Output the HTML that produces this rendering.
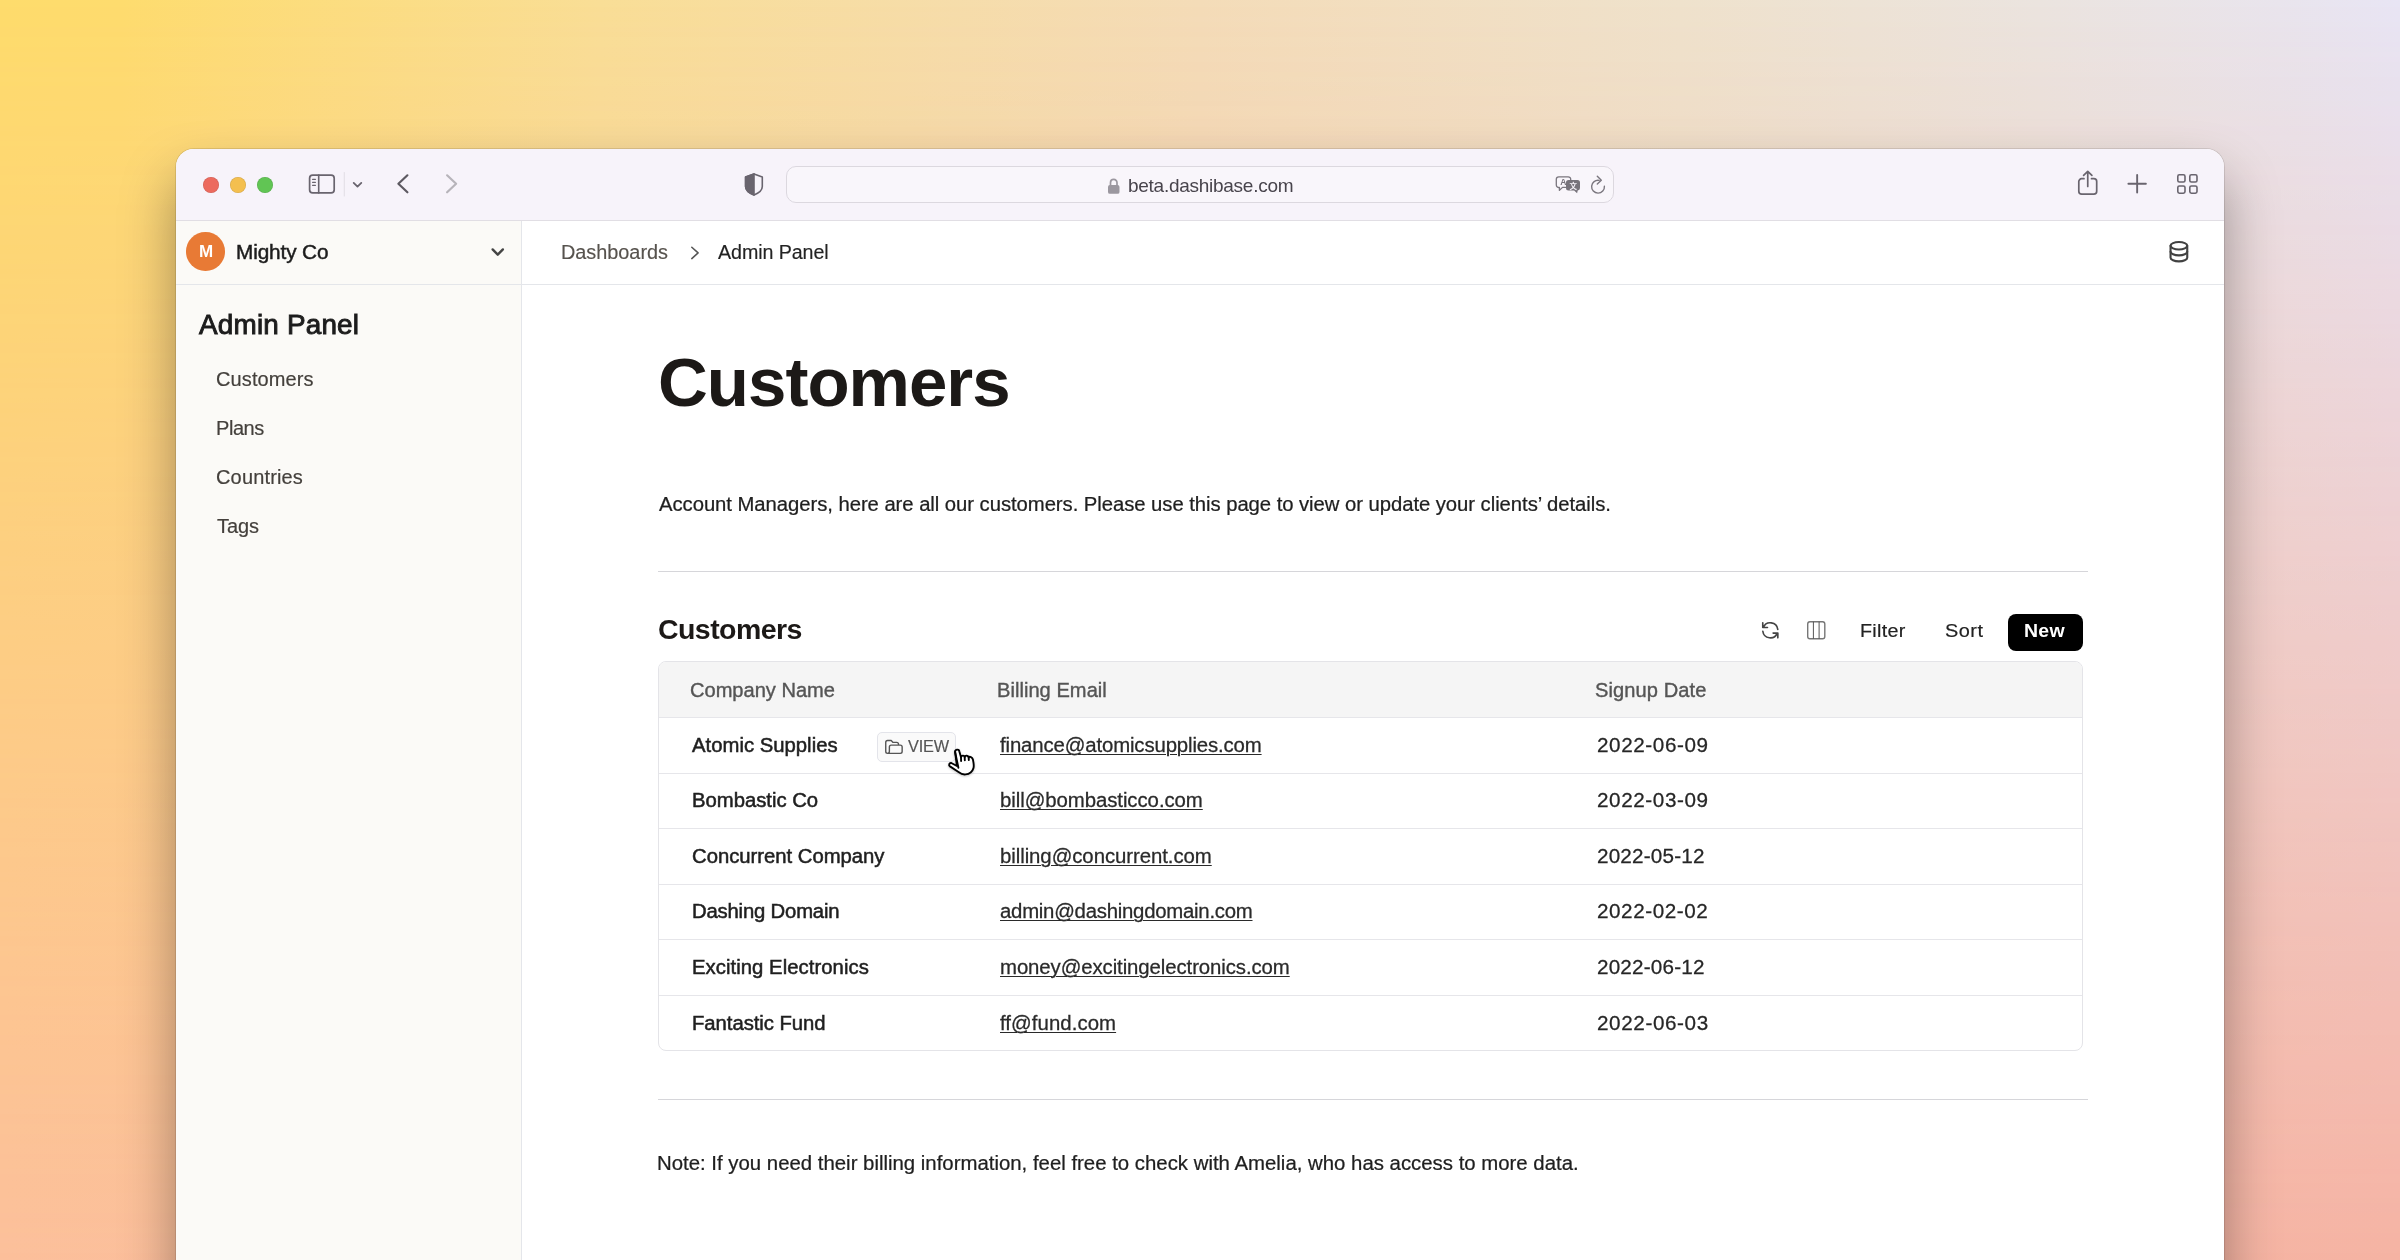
<!DOCTYPE html>
<html lang="en">
<head>
<meta charset="utf-8">
<title>Customers – Admin Panel</title>
<style>

*{box-sizing:border-box}
html,body{margin:0;padding:0}
body{width:2400px;height:1260px;overflow:hidden;position:relative;font-family:"Liberation Sans",sans-serif;background:#f6d9a8}
.bg,.bg2{position:absolute;left:0;top:0;width:2400px;height:1260px}
.bg{background:linear-gradient(90deg,#fedc6c 0%,#fedc6e 5%,#f9de96 25%,#f4dcb8 50%,#efe2cc 70%,#ebe4df 85%,#e8e5f4 100%)}
.bg2{background:linear-gradient(90deg,#fcbf9b 0%,#f8b9a0 50%,#f5b3a3 100%);-webkit-mask-image:linear-gradient(180deg,rgba(0,0,0,0) 0%,rgba(0,0,0,1) 100%);mask-image:linear-gradient(180deg,rgba(0,0,0,0) 0%,rgba(0,0,0,1) 100%)}
.win{position:absolute;left:176px;top:149px;width:2048px;height:1180px;border-radius:18px 18px 0 0;background:#fff;box-shadow:0 0 0 1px rgba(0,0,0,.10),0 30px 54px rgba(0,0,0,.36)}
.clip{position:absolute;left:0;top:0;width:100%;height:100%;border-radius:18px 18px 0 0;overflow:hidden}
.t{will-change:transform;position:absolute;line-height:1;white-space:nowrap;margin:0;padding:0;font-weight:400}
.abs{position:absolute}
svg{position:absolute;overflow:visible;will-change:transform}
a{color:inherit}

</style>
</head>
<body>
<div class="bg"></div><div class="bg2"></div>
<div class="win">

<div class="clip">
<header class="abs" style="left:0;top:0;width:2048px;height:72px;background:#f7f3fa;border-bottom:1px solid #e1dee4">
  <i class="abs" style="left:27.25px;top:27.5px;width:16px;height:16px;border-radius:50%;background:#ec6a5e;box-shadow:inset 0 0 0 .6px rgba(0,0,0,.12)"></i>
  <i class="abs" style="left:54.25px;top:27.5px;width:16px;height:16px;border-radius:50%;background:#f4bf4f;box-shadow:inset 0 0 0 .6px rgba(0,0,0,.12)"></i>
  <i class="abs" style="left:81.25px;top:27.5px;width:16px;height:16px;border-radius:50%;background:#61c554;box-shadow:inset 0 0 0 .6px rgba(0,0,0,.12)"></i>
  <div class="abs" style="left:610px;top:17px;width:828px;height:37px;border:1px solid #dcd8df;border-radius:10px;background:rgba(255,255,255,.28)"></div>
  <svg width="2048" height="71" viewBox="0 0 2048 71" style="left:0;top:0" fill="none" stroke="#69646e" stroke-linecap="round" stroke-linejoin="round">
    <!-- sidebar toggle -->
    <rect x="133.6" y="26.1" width="24.6" height="17.8" rx="3.1" stroke-width="1.7"/>
    <path d="M142.7 26.1V43.9" stroke-width="1.6"/>
    <path d="M136.600 30.300h2.800M136.600 33.300h2.800M136.600 36.300h2.800" stroke-width="1.350"/>
    <path d="M168.25 23.5V47" stroke="#e1dde4" stroke-width="1"/>
    <path d="M177.7 33.9l3.8 3.7 3.8-3.7" stroke-width="1.8"/>
    <!-- back / forward -->
    <path d="M231.400 26.300l-9 8.500 9 8.500" stroke="#5d5961" stroke-width="2.200"/>
    <path d="M271.100 26.300l9 8.500-9 8.500" stroke="#b7b4ba" stroke-width="2.200"/>
    <!-- shield -->
    <path d="M578 24.900l-8.400 3v9.600c0 4 3.400 6.500 8.400 8.500 5-2 8.300-4.500 8.300-8.500v-9.600z" stroke-width="1.600"/>
    <path d="M578 24.900l-8.400 3v9.600c0 4 3.400 6.500 8.400 8.500z" fill="#69646e" stroke-width="1.600"/>
    <!-- lock -->
    <rect x="932" y="36" width="11.500" height="8.800" rx="1.900" fill="#9b979f" stroke="none"/>
    <path d="M934.500 36.500v-2.800a3.250 3.250 0 0 1 6.500 0v2.800" stroke="#9b979f" stroke-width="1.7"/>
    <!-- translate -->
    <g stroke="#7a767e">
    <path d="M1382.800 27.800h9.400a2.500 2.500 0 0 1 2.500 2.500v.600M1389.500 38.400h-3l-3.100 3v-3a2.500 2.500 0 0 1-3.100-2.400v-5.700a2.500 2.500 0 0 1 2.500-2.500" stroke-width="1.300"/>
    <path d="M1392.500 31h9a2.500 2.500 0 0 1 2.500 2.500v5.600a2.500 2.500 0 0 1-2.300 2.500l-.600 2.700-3-2.700h-5.600a2.500 2.500 0 0 1-2.500-2.500v-5.600a2.500 2.500 0 0 1 2.500-2.500z" fill="#77737b" stroke="none"/>
    <!-- reload -->
    <path d="M1428.400 37.100a6.400 6.400 0 1 1-5.300-5.730" stroke-width="1.400"/>
    <path d="M1421.300 27.300l4 4-4 3.700" stroke-width="1.400"/>
    </g>
    <!-- share -->
    <path d="M1908 29.700h-2.300a2.900 2.900 0 0 0-2.900 2.900v9.700a2.900 2.900 0 0 0 2.900 2.900h12.100a2.900 2.900 0 0 0 2.900-2.900v-9.700a2.900 2.900 0 0 0-2.900-2.900h-2.300" stroke-width="1.700"/>
    <path d="M1911.750 37.500v-14.800M1907.600 26.400l4.150-4.100 4.150 4.100" stroke-width="1.700"/>
    <!-- plus -->
    <path d="M1952.400 34.750h17.500M1961.150 26v17.500" stroke-width="1.900"/>
    <!-- grid -->
    <rect x="2001.800" y="25.800" width="7.200" height="7.200" rx="1.600" stroke-width="1.600"/>
    <rect x="2013.800" y="25.800" width="7.200" height="7.200" rx="1.600" stroke-width="1.600"/>
    <rect x="2001.800" y="37" width="7.200" height="7.200" rx="1.600" stroke-width="1.600"/>
    <rect x="2013.800" y="37" width="7.200" height="7.200" rx="1.600" stroke-width="1.600"/>
    <text x="1384.200" y="36.100" font-family="Liberation Sans, sans-serif" font-size="8.500" font-weight="700" fill="#77737b" stroke="none">A</text>
    <text x="1393.600" y="40.200" font-family="Liberation Sans, Noto Sans CJK SC, sans-serif" font-size="7.500" font-weight="700" fill="#f7f3fa" stroke="none">文</text>
  </svg>
  <span class="t" style="left:952.00px;top:27.00px;font-size:19px;color:#48444c;letter-spacing:-0.266px;">beta.dashibase.com</span>
</header>


<aside class="abs" style="left:0;top:72px;width:346px;height:1108px;background:#fbfaf7;border-right:1px solid #e4e6ea"></aside>
<div class="abs" style="left:0;top:135px;width:2048px;height:1px;background:#e4e6ea"></div>
<div class="abs" style="left:10.4px;top:83.3px;width:38.5px;height:38.5px;border-radius:50%;background:#e87a35"></div>
<span class="t" style="left:22.55px;top:93.61px;font-size:17px;color:#fff;font-weight:700;">M</span>
<span class="t" style="left:60.00px;top:94.00px;font-size:19.4px;color:#1c1c1c;letter-spacing:-0.102px;-webkit-text-stroke:0.45px #1c1c1c;transform:scaleX(1.07);transform-origin:0 0;">Mighty Co</span>
<nav>
  <a class="t" style="left:385.00px;top:94.00px;font-size:19.5px;color:#57534e;letter-spacing:-0.033px;-webkit-text-stroke:0.15px #57534e;transform:scaleX(1.02);transform-origin:0 0;">Dashboards</a>
  <a class="t" style="left:542.00px;top:94.00px;font-size:19.5px;color:#232323;letter-spacing:-0.097px;-webkit-text-stroke:0.15px #232323;transform:scaleX(1.01);transform-origin:0 0;">Admin Panel</a>
</nav>
<svg width="2048" height="64" viewBox="0 72 2048 64" style="left:0;top:72px" fill="none" stroke-linecap="round" stroke-linejoin="round">
  <path d="M316.600 100.400l5.150 5.300 5.150-5.300" stroke="#444" stroke-width="2.400"/>
  <path d="M515.800 98.200l6.300 5.700-6.300 5.700" stroke="#555" stroke-width="1.550"/>
  <g stroke="#414141" stroke-width="2.100">
    <ellipse cx="2002.900" cy="96.750" rx="8.350" ry="3.700"/>
    <path d="M1994.550 96.750V108.650a8.350 3.700 0 0 0 16.700 0V96.750"/>
    <path d="M1994.550 102.700a8.350 3.700 0 0 0 16.700 0"/>
  </g>
</svg>
<h2 class="t" style="left:23.00px;top:163.00px;font-size:26.8px;color:#1c1c1c;letter-spacing:0.19px;-webkit-text-stroke:0.9px #1c1c1c;transform:scaleX(1.04);transform-origin:0 0;">Admin Panel</h2>
<ul style="list-style:none;margin:0;padding:0">
    <li><a class="t" style="left:40.00px;top:221.00px;font-size:19.5px;color:#44403c;letter-spacing:0.117px;-webkit-text-stroke:0.18px #44403c;transform:scaleX(1.025);transform-origin:0 0;">Customers</a></li>
    <li><a class="t" style="left:40.00px;top:270.00px;font-size:19.5px;color:#44403c;letter-spacing:-0.413px;-webkit-text-stroke:0.18px #44403c;transform:scaleX(1.025);transform-origin:0 0;">Plans</a></li>
    <li><a class="t" style="left:40.00px;top:319.00px;font-size:19.5px;color:#44403c;letter-spacing:0.16px;-webkit-text-stroke:0.18px #44403c;transform:scaleX(1.025);transform-origin:0 0;">Countries</a></li>
    <li><a class="t" style="left:41.00px;top:368.00px;font-size:19.5px;color:#44403c;letter-spacing:-0.091px;-webkit-text-stroke:0.18px #44403c;transform:scaleX(1.025);transform-origin:0 0;">Tags</a></li>
</ul>


<main>
<h1 class="t" style="left:482.00px;top:199.00px;font-size:69px;color:#1c1917;font-weight:700;letter-spacing:-0.986px;">Customers</h1>
<p class="t" style="left:483.00px;top:346.00px;font-size:19.5px;color:#1f1f1f;letter-spacing:-0.05px;-webkit-text-stroke:0.24px #1f1f1f;transform:scaleX(1.04);transform-origin:0 0;">Account Managers, here are all our customers. Please use this page to view or update your clients’ details.</p>
<div class="abs" style="left:482px;top:421.75px;width:1430px;height:1px;background:#d6d6da"></div>
<h2 class="t" style="left:482.00px;top:466.00px;font-size:28.5px;color:#1c1917;font-weight:700;letter-spacing:-0.564px;">Customers</h2>
<svg width="22.600" height="22.600" viewBox="0 0 24 24" style="left:1582.900px;top:470.200px" fill="none" stroke="#444" stroke-width="1.750" stroke-linecap="round" stroke-linejoin="round"><path d="M4 4v5h.582m15.356 2A8.001 8.001 0 004.582 9m0 0H9m11 11v-5h-.581m0 0a8.003 8.003 0 01-15.357-2m15.357 2H15"/></svg>
<svg width="22" height="22" viewBox="0 0 22 22" style="left:1629px;top:469.900px" fill="none"><rect x="2.700" y="2.700" width="17.100" height="17.100" rx="2.200" stroke="#777" stroke-width="1.400"/><path d="M8.400 2.700v17.100M14.100 2.700v17.100" stroke="#555" stroke-width="1"/></svg>
<span class="t" style="left:1684.00px;top:473.00px;font-size:18.3px;color:#222;letter-spacing:0.247px;-webkit-text-stroke:0.18px #222;transform:scaleX(1.08);transform-origin:0 0;">Filter</span>
<span class="t" style="left:1769.00px;top:473.00px;font-size:18.3px;color:#222;letter-spacing:0.445px;-webkit-text-stroke:0.18px #222;transform:scaleX(1.09);transform-origin:0 0;">Sort</span>
<div class="abs" style="left:1831.5px;top:465.25px;width:75.7px;height:36.5px;border-radius:8px;background:#000"></div>
<span class="t" style="left:1848.00px;top:473.00px;font-size:18.4px;color:#fff;font-weight:700;letter-spacing:0.217px;transform:scaleX(1.06);transform-origin:0 0;">New</span>
<section class="abs" style="left:482px;top:512px;width:1425px;height:390px;border:1px solid #e4e4e8;border-radius:8px;background:#fff">
  <div class="abs" style="left:0;top:0;width:1423px;height:55px;background:#f5f5f5;border-radius:7px 7px 0 0"></div>
  <span class="t" style="left:31.00px;top:19.00px;font-size:19.7px;color:#555;letter-spacing:-0.008px;-webkit-text-stroke:0.38px #555;transform:scaleX(1.02);transform-origin:0 0;">Company Name</span>
  <span class="t" style="left:338.00px;top:19.00px;font-size:19.7px;color:#555;letter-spacing:0.035px;-webkit-text-stroke:0.38px #555;transform:scaleX(1.02);transform-origin:0 0;">Billing Email</span>
  <span class="t" style="left:936.00px;top:19.00px;font-size:19.7px;color:#555;letter-spacing:0.077px;-webkit-text-stroke:0.38px #555;transform:scaleX(1.02);transform-origin:0 0;">Signup Date</span>
  
  <div class="abs" style="left:0;top:55px;width:1423px;height:1px;background:#e6e6ea"></div>
  <span class="t" style="left:33.00px;top:74.00px;font-size:19.5px;color:#1f1f1f;letter-spacing:0.012px;-webkit-text-stroke:0.5px #1f1f1f;transform:scaleX(1.04);transform-origin:0 0;">Atomic Supplies</span>
  <a class="t" style="left:341.00px;top:74.00px;font-size:19.5px;color:#2a2a2a;letter-spacing:-0.138px;-webkit-text-stroke:0.26px #2a2a2a;transform:scaleX(1.045);transform-origin:0 0;text-decoration:underline;text-decoration-thickness:1.4px;text-underline-offset:1.7px;">finance@atomicsupplies.com</a>
  <span class="t" style="left:938.00px;top:74.00px;font-size:19.5px;color:#262626;letter-spacing:0.559px;-webkit-text-stroke:0.26px #262626;transform:scaleX(1.06);transform-origin:0 0;">2022-06-09</span>
  <div class="abs" style="left:0;top:111px;width:1423px;height:1px;background:#e6e6ea"></div>
  <span class="t" style="left:33.00px;top:129.00px;font-size:19.5px;color:#1f1f1f;letter-spacing:-0.008px;-webkit-text-stroke:0.5px #1f1f1f;transform:scaleX(1.04);transform-origin:0 0;">Bombastic Co</span>
  <a class="t" style="left:341.00px;top:129.00px;font-size:19.5px;color:#2a2a2a;letter-spacing:-0.067px;-webkit-text-stroke:0.26px #2a2a2a;transform:scaleX(1.045);transform-origin:0 0;text-decoration:underline;text-decoration-thickness:1.4px;text-underline-offset:1.7px;">bill@bombasticco.com</a>
  <span class="t" style="left:938.00px;top:129.00px;font-size:19.5px;color:#262626;letter-spacing:0.559px;-webkit-text-stroke:0.26px #262626;transform:scaleX(1.06);transform-origin:0 0;">2022-03-09</span>
  <div class="abs" style="left:0;top:166px;width:1423px;height:1px;background:#e6e6ea"></div>
  <span class="t" style="left:33.00px;top:185.00px;font-size:19.5px;color:#1f1f1f;letter-spacing:-0.018px;-webkit-text-stroke:0.5px #1f1f1f;transform:scaleX(1.04);transform-origin:0 0;">Concurrent Company</span>
  <a class="t" style="left:341.00px;top:185.00px;font-size:19.5px;color:#2a2a2a;letter-spacing:-0.065px;-webkit-text-stroke:0.26px #2a2a2a;transform:scaleX(1.045);transform-origin:0 0;text-decoration:underline;text-decoration-thickness:1.4px;text-underline-offset:1.7px;">billing@concurrent.com</a>
  <span class="t" style="left:938.00px;top:185.00px;font-size:19.5px;color:#262626;letter-spacing:0.18px;-webkit-text-stroke:0.26px #262626;transform:scaleX(1.06);transform-origin:0 0;">2022-05-12</span>
  <div class="abs" style="left:0;top:222px;width:1423px;height:1px;background:#e6e6ea"></div>
  <span class="t" style="left:33.00px;top:240.00px;font-size:19.5px;color:#1f1f1f;letter-spacing:-0.176px;-webkit-text-stroke:0.5px #1f1f1f;transform:scaleX(1.04);transform-origin:0 0;">Dashing Domain</span>
  <a class="t" style="left:341.00px;top:240.00px;font-size:19.5px;color:#2a2a2a;letter-spacing:-0.251px;-webkit-text-stroke:0.26px #2a2a2a;transform:scaleX(1.045);transform-origin:0 0;text-decoration:underline;text-decoration-thickness:1.4px;text-underline-offset:1.7px;">admin@dashingdomain.com</a>
  <span class="t" style="left:938.00px;top:240.00px;font-size:19.5px;color:#262626;letter-spacing:0.526px;-webkit-text-stroke:0.26px #262626;transform:scaleX(1.06);transform-origin:0 0;">2022-02-02</span>
  <div class="abs" style="left:0;top:277px;width:1423px;height:1px;background:#e6e6ea"></div>
  <span class="t" style="left:33.00px;top:296.00px;font-size:19.5px;color:#1f1f1f;letter-spacing:0.049px;-webkit-text-stroke:0.5px #1f1f1f;transform:scaleX(1.04);transform-origin:0 0;">Exciting Electronics</span>
  <a class="t" style="left:341.00px;top:296.00px;font-size:19.5px;color:#2a2a2a;letter-spacing:-0.092px;-webkit-text-stroke:0.26px #2a2a2a;transform:scaleX(1.045);transform-origin:0 0;text-decoration:underline;text-decoration-thickness:1.4px;text-underline-offset:1.7px;">money@excitingelectronics.com</a>
  <span class="t" style="left:938.00px;top:296.00px;font-size:19.5px;color:#262626;letter-spacing:0.18px;-webkit-text-stroke:0.26px #262626;transform:scaleX(1.06);transform-origin:0 0;">2022-06-12</span>
  <div class="abs" style="left:0;top:333px;width:1423px;height:1px;background:#e6e6ea"></div>
  <span class="t" style="left:33.00px;top:352.00px;font-size:19.5px;color:#1f1f1f;letter-spacing:-0.044px;-webkit-text-stroke:0.5px #1f1f1f;transform:scaleX(1.04);transform-origin:0 0;">Fantastic Fund</span>
  <a class="t" style="left:341.00px;top:352.00px;font-size:19.5px;color:#2a2a2a;letter-spacing:0.055px;-webkit-text-stroke:0.26px #2a2a2a;transform:scaleX(1.045);transform-origin:0 0;text-decoration:underline;text-decoration-thickness:1.4px;text-underline-offset:1.7px;">ff@fund.com</a>
  <span class="t" style="left:938.00px;top:352.00px;font-size:19.5px;color:#262626;letter-spacing:0.571px;-webkit-text-stroke:0.26px #262626;transform:scaleX(1.06);transform-origin:0 0;">2022-06-03</span>
  <div class="abs" style="left:218px;top:70px;width:79px;height:29.500px;border:1px solid #e3e4ea;border-radius:5px;background:#fafafa"></div>
  <svg width="21.900" height="21.900" viewBox="0 0 24 24" style="left:223.96px;top:73.90px" fill="none" stroke="#555" stroke-width="1.530" stroke-linecap="round" stroke-linejoin="round"><path d="M5 19a2 2 0 01-2-2V7a2 2 0 012-2h4l2 2h4a2 2 0 012 2v1M5 19h14a2 2 0 002-2v-5a2 2 0 00-2-2H9a2 2 0 00-2 2v5a2 2 0 01-2 2z"/></svg>
  <span class="t" style="left:249.00px;top:76.00px;font-size:16.3px;color:#555;letter-spacing:-0.194px;-webkit-text-stroke:0.15px #555;">VIEW</span>
</section>
<svg width="36" height="36" viewBox="0 0 36 36" style="left:768px;top:595px;filter:drop-shadow(0 1px 1.200px rgba(0,0,0,.22))" stroke="#000" stroke-width="1.900" stroke-linecap="round" stroke-linejoin="round" fill="#fff">
  <path d="M12.900 22L7.300 19c-2-.400-3 2.200-1.300 3.400l8.500 5.600c1.700 1.300 4 2.700 7 2.400 4-.400 7-2.900 8-6.400.700-2.500 0-5.500-.600-8.500-.500-2.500-3.400-3.500-4.200-1.900-.400-2.300-3.400-2.600-4-.600-.400-1.900-3.200-1.700-3.700.200l-1.700-6c-.500-2.600-4.500-1.700-4.200.800z"/>
  <path d="M11.100 8l3.300 15.800M17 13.200l.100 3.900M20.700 13.300l.100 3M24.700 13.600l.100 2.400" fill="none"/>
</svg>
<div class="abs" style="left:482px;top:950px;width:1430px;height:1px;background:#d6d6da"></div>
<p class="t" style="left:481.00px;top:1005.00px;font-size:19.5px;color:#1f1f1f;letter-spacing:-0.003px;-webkit-text-stroke:0.24px #1f1f1f;transform:scaleX(1.045);transform-origin:0 0;">Note: If you need their billing information, feel free to check with Amelia, who has access to more data.</p>
</main>

</div>
</div>
</body>
</html>
